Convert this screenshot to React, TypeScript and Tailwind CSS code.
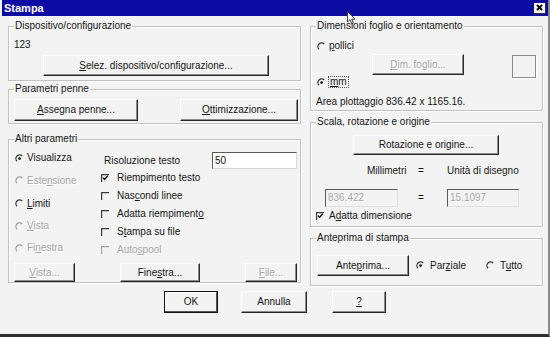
import React from "react";

function U({ children }: { children: React.ReactNode }) {
  return <span className="underline underline-offset-[1px] decoration-[1px]">{children}</span>;
}

function Group({ title, className = "", children }: { title: string; className?: string; children?: React.ReactNode }) {
  return (
    <div className={`relative border border-[#c2c2c2] shadow-[inset_1px_1px_0_#ffffff,1px_1px_0_#ffffff] ${className}`}>
      <span className="absolute -top-[7px] left-[5px] bg-[#f3f3f3] px-[1px] leading-[12px] whitespace-nowrap">{title}</span>
      {children}
    </div>
  );
}

function Btn({ children, className = "", disabled = false, def = false }: { children: React.ReactNode; className?: string; disabled?: boolean; def?: boolean }) {
  return (
    <button
      type="button"
      className={`flex items-center justify-center shrink-0 bg-[#f3f3f3] leading-[12px] ${
        def
          ? "border border-[#111] shadow-[inset_-1px_-1px_0_#555,inset_1px_1px_0_#fff]"
          : "border-t border-l border-t-[#ffffff] border-l-[#ffffff] border-r border-b border-r-[#262626] border-b-[#262626] shadow-[inset_-1px_-1px_0_#8c8c8c]"
      } ${disabled ? "text-[#a6a6a6] [text-shadow:1px_1px_0_#ffffff]" : "text-[#161616]"} ${className}`}
    >
      {children}
    </button>
  );
}

function Radio({ checked = false, disabled = false }: { checked?: boolean; disabled?: boolean }) {
  return (
    <svg width="9" height="9" viewBox="0 0 9 9" className="shrink-0">
      <path d="M2 7.2 A3.6 3.6 0 0 1 7.2 2" fill="none" stroke={disabled ? "#a0a0a0" : "#3c3c3c"} strokeWidth="1.3" />
      {checked && <circle cx="4.6" cy="4.6" r="1.3" fill="#111" />}
    </svg>
  );
}

function Check({ checked = false, disabled = false }: { checked?: boolean; disabled?: boolean }) {
  return (
    <svg width="8" height="8" viewBox="0 0 8 8" className="shrink-0">
      <path d="M0.6 8 V0.6 H8" fill="none" stroke={disabled ? "#a0a0a0" : "#3a3a3a"} strokeWidth="1.2" />
      {checked && <path d="M2 3.6 L3.5 5.4 L6.8 1.8" fill="none" stroke="#111" strokeWidth="1.4" />}
    </svg>
  );
}

const dis = "text-[#a6a6a6] [text-shadow:1px_1px_0_#ffffff]";

export default function App() {
  return (
    <div className="relative w-[550px] h-[337px] overflow-hidden bg-[#f3f3f3] border-r-2 border-b-[3px] border-r-[#8a8a8a] border-b-[#2e2e2e] font-['Liberation_Sans',Arial,sans-serif] text-[10px] leading-[12px] text-[#161616]">
      {/* title bar */}
      <div className="ml-[2px] h-[16px] bg-[#0c0ca2] flex items-center justify-between pl-[2px] pr-[2px]">
        <span className="text-white font-bold text-[11px] leading-[12px]">Stampa</span>
        <button type="button" className="w-[12px] h-[11px] bg-[#f2f2f2] border-r border-b border-[#333] flex items-center justify-center">
          <svg width="7" height="7" viewBox="0 0 7 7">
            <path d="M1 1 L6 6 M6 1 L1 6" stroke="#000" strokeWidth="1.8" />
          </svg>
        </button>
      </div>

      <div className="flex pl-[8px] mt-[10px]">
        {/* left column */}
        <div className="w-[293px] flex flex-col">
          <Group title="Dispositivo/configurazione" className="h-[55px]">
            <div className="pt-[12px] pl-[5px]">123</div>
            <Btn className="mt-[4px] ml-[34px] w-[226px] h-[21px]">
              <U>S</U>elez. dispositivo/configurazione...
            </Btn>
          </Group>

          <Group title="Parametri penne" className="mt-[8px] h-[35px]">
            <div className="pt-[9px] pl-[5px] pr-[2px] flex justify-between">
              <Btn className="w-[124px] h-[22px]">
                <U>A</U>ssegna penne...
              </Btn>
              <Btn className="w-[118px] h-[22px]">
                <U>O</U>ttimizzazione...
              </Btn>
            </div>
          </Group>

          <Group title="Altri parametri" className="mt-[15px] h-[144px]">
            <div className="h-[123px] flex">
              <div className="w-[92px] pl-[6px] pt-[7px] flex flex-col">
                <div className="h-[22px] flex items-center gap-[3px]">
                  <Radio checked />
                  <span>Visualizza</span>
                </div>
                <div className="h-[23px] flex items-center gap-[3px]">
                  <Radio disabled />
                  <span className={dis}>
                    Este<U>n</U>sione
                  </span>
                </div>
                <div className="h-[23px] flex items-center gap-[3px]">
                  <Radio />
                  <span>
                    <U>L</U>imiti
                  </span>
                </div>
                <div className="h-[22px] flex items-center gap-[3px]">
                  <Radio disabled />
                  <span className={dis}>
                    <U>V</U>ista
                  </span>
                </div>
                <div className="h-[22px] flex items-center gap-[3px]">
                  <Radio disabled />
                  <span className={dis}>
                    Fi<U>n</U>estra
                  </span>
                </div>
              </div>
              <div className="flex-1 pt-[12px] flex flex-col">
                <div className="h-[17px] flex items-center">
                  <span className="w-[111px] pl-[3px]">Risoluzione testo</span>
                  <div className="w-[85px] h-[17px] bg-white border-t border-l border-[#5a5a5a] border-r border-b border-r-[#d8d8d8] border-b-[#d8d8d8] flex items-center pl-[2px]">
                    50
                  </div>
                </div>
                <div className="h-[18px] flex items-center gap-[8px]">
                  <Check checked />
                  <span>Riempimento testo</span>
                </div>
                <div className="h-[18px] flex items-center gap-[8px]">
                  <Check />
                  <span>
                    Nas<U>c</U>ondi linee
                  </span>
                </div>
                <div className="h-[18px] flex items-center gap-[8px]">
                  <Check />
                  <span>
                    Adatta riempiment<U>o</U>
                  </span>
                </div>
                <div className="h-[18px] flex items-center gap-[8px]">
                  <Check />
                  <span>
                    S<U>t</U>ampa su file
                  </span>
                </div>
                <div className="h-[18px] flex items-center gap-[8px]">
                  <Check disabled />
                  <span className={dis}>
                    Auto<U>s</U>pool
                  </span>
                </div>
              </div>
            </div>
            <div className="h-[19px] flex pl-[5px] gap-[45px]">
              <Btn disabled className="w-[61px] h-[19px]">
                <U>V</U>ista...
              </Btn>
              <Btn className="w-[80px] h-[19px]">
                Fine<U>s</U>tra...
              </Btn>
              <Btn disabled className="w-[52px] h-[19px]">
                <U>F</U>ile...
              </Btn>
            </div>
          </Group>
        </div>

        {/* right column */}
        <div className="ml-[9px] w-[233px] flex flex-col">
          <Group title="Dimensioni foglio e orientamento" className="h-[85px]">
            <div className="flex">
              <div className="w-[61px] pl-[6px] pt-[13px] flex flex-col">
                <div className="h-[12px] flex items-center gap-[3px]">
                  <Radio />
                  <span>
                    <U>p</U>ollici
                  </span>
                </div>
                <div className="mt-[24px] h-[12px] flex items-center gap-[2px]">
                  <Radio checked />
                  <span className="border border-dotted border-[#555] px-[1px] leading-[10px]">
                    <U>m</U>m
                  </span>
                </div>
              </div>
              <Btn disabled className="mt-[27px] w-[92px] h-[21px]">
                <U>D</U>im. foglio...
              </Btn>
              <div className="ml-[48px] mt-[28px] w-[24px] h-[23px] border border-[#8a8a8a] shadow-[1px_1px_0_#ffffff]" />
            </div>
            <div className="mt-[8px] pl-[5px]">Area plottaggio 836.42 x 1165.16.</div>
          </Group>

          <Group title="Scala, rotazione e origine" className="mt-[11px] h-[105px]">
            <Btn className="mt-[12px] ml-[42px] w-[146px] h-[20px]">Rotazione e origine...</Btn>
            <div className="mt-[10px] pl-[56px] flex h-[12px] items-center">
              <span className="w-[51px]">Millimetri</span>
              <span className="w-[29px]">=</span>
              <span>Unità di disegno</span>
            </div>
            <div className="mt-[12px] pl-[14px] flex h-[18px] items-center">
              <div className={`w-[73px] h-[18px] border-t border-l border-[#5a5a5a] border-r border-b border-r-[#e0e0e0] border-b-[#e0e0e0] flex items-center pl-[2px] ${dis}`}>
                836.422
              </div>
              <span className="ml-[20px] w-[29px]">=</span>
              <div className={`w-[72px] h-[18px] border-t border-l border-[#5a5a5a] border-r border-b border-r-[#e0e0e0] border-b-[#e0e0e0] flex items-center pl-[2px] ${dis}`}>
                15.1097
              </div>
            </div>
            <div className="mt-[3px] pl-[5px] h-[12px] flex items-center gap-[5px]">
              <Check checked />
              <span>
                A<U>d</U>atta dimensione
              </span>
            </div>
          </Group>

          <Group title="Anteprima di stampa" className="mt-[11px] h-[48px]">
            <div className="pt-[16px] pl-[6px] flex items-center h-[21px] box-content">
              <Btn className="w-[92px] h-[21px]">
                Ante<U>p</U>rima...
              </Btn>
              <div className="ml-[7px] w-[70px] flex items-center gap-[5px]">
                <Radio checked />
                <span>
                  Par<U>z</U>iale
                </span>
              </div>
              <div className="flex items-center gap-[5px]">
                <Radio />
                <span>
                  T<U>u</U>tto
                </span>
              </div>
            </div>
          </Group>
        </div>
      </div>

      {/* bottom buttons */}
      <div className="mt-[5px] pl-[164px] flex">
        <Btn def className="w-[54px] h-[22px]">OK</Btn>
        <Btn className="ml-[23px] w-[66px] h-[22px]">Annulla</Btn>
        <Btn className="ml-[25px] w-[54px] h-[22px]">
          <U>?</U>
        </Btn>
      </div>

      {/* mouse pointer */}
      <svg className="absolute left-[347px] top-[11px]" width="9" height="14" viewBox="0 0 9 14">
        <path d="M0.5 0.5 V11 L3 8.6 L4.8 12.8 L6.4 12.1 L4.7 8.1 H8 Z" fill="#ffffff" stroke="#3a3a3a" strokeWidth="1" />
      </svg>
    </div>
  );
}
